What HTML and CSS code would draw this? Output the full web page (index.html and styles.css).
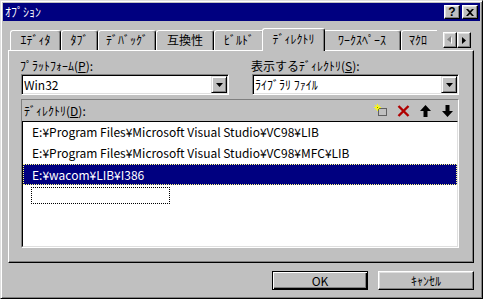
FILE: index.html
```html
<!DOCTYPE html>
<html lang="ja">
<head>
    <meta charset="UTF-8">
    <title>ｵﾌﾟｼｮﾝ</title>
    <link rel="stylesheet" href="styles.css">
</head>
<body>
    <div class="window">
        <div class="titlebar">
            <span class="title">ｵﾌﾟｼｮﾝ</span>
            <div class="cap-buttons">
                <div class="cap-btn cap-help">?</div>
                <div class="cap-btn">
                    <svg width="8" height="7" viewBox="0 0 8 7"><path d="M0 0h2l2 2 2-2h2L5 3.5 8 7H6L4 5 2 7H0l3-3.5z" fill="#000"/></svg>
                </div>
            </div>
        </div>
        <div class="dialog">
            <div class="tabstrip">
                <div class="tabs">
                    <div class="tab tab-editor">ｴﾃﾞｨﾀ</div>
                    <div class="tab tab-tab">ﾀﾌﾞ</div>
                    <div class="tab tab-debug">ﾃﾞﾊﾞｯｸﾞ</div>
                    <div class="tab tab-compat">互換性</div>
                    <div class="tab tab-build">ﾋﾞﾙﾄﾞ</div>
                    <div class="tab tab-dir active">ﾃﾞｨﾚｸﾄﾘ</div>
                    <div class="tab tab-workspace">ﾜｰｸｽﾍﾟｰｽ</div>
                    <div class="tab tab-macro">ﾏｸﾛ</div>
                </div>
                <div class="tab-scroll">
                    <div class="scroll-btn">
                        <svg width="6" height="8" viewBox="0 0 6 8"><path d="M5 1v7L1 4.5z" fill="#fff"/><path d="M4 0v7L0 3.5z" fill="#808080"/></svg>
                    </div>
                    <div class="scroll-btn">
                        <svg width="4" height="7" viewBox="0 0 4 7"><path d="M0 0v7l4-3.5z" fill="#000"/></svg>
                    </div>
                </div>
            </div>
            <div class="panel">
                <div class="field-row">
                    <div class="field field-platform">
                        <label>ﾌﾟﾗｯﾄﾌｫｰﾑ(<u>P</u>):</label>
                        <div class="combo">
                            <span class="combo-text">Win32</span>
                            <span class="drop"><svg width="7" height="4" viewBox="0 0 7 4"><path d="M0 0h7L3.5 4z" fill="#000"/></svg></span>
                        </div>
                    </div>
                    <div class="field field-kind">
                        <label>表示するﾃﾞｨﾚｸﾄﾘ(<u>S</u>):</label>
                        <div class="combo">
                            <span class="combo-text">ﾗｲﾌﾞﾗﾘ ﾌｧｲﾙ</span>
                            <span class="drop"><svg width="7" height="4" viewBox="0 0 7 4"><path d="M0 0h7L3.5 4z" fill="#000"/></svg></span>
                        </div>
                    </div>
                </div>
                <div class="dirbox">
                    <div class="dirhead">
                        <label>ﾃﾞｨﾚｸﾄﾘ(<u>D</u>):</label>
                        <div class="tools">
                            <span class="tool">
                                <svg width="14" height="13" viewBox="0 0 14 13">
                                    <rect x="4.5" y="4.5" width="8" height="7" fill="none" stroke="#000" stroke-dasharray="1 1"/>
                                    <path d="M3.5 0v7M0 3.5h7M1 1l5 5M6 1L1 6" stroke="#ffff00" stroke-width="1"/>
                                    <rect x="3" y="3" width="1" height="1" fill="#808000"/>
                                </svg>
                            </span>
                            <span class="tool">
                                <svg width="13" height="12" viewBox="0 0 13 12"><path d="M1.5 1l10 10M11.5 1l-10 10" stroke="#b00000" stroke-width="2.4"/></svg>
                            </span>
                            <span class="tool">
                                <svg width="11" height="12" viewBox="0 0 11 12"><path d="M5.5 0L11 6H7.5v6h-4V6H0z" fill="#000"/></svg>
                            </span>
                            <span class="tool">
                                <svg width="11" height="12" viewBox="0 0 11 12"><path d="M5.5 12L11 6H7.5V0h-4v6H0z" fill="#000"/></svg>
                            </span>
                        </div>
                    </div>
                    <ul class="dirlist">
                        <li class="item">E:¥Program Files¥Microsoft Visual Studio¥VC98¥LIB</li>
                        <li class="item">E:¥Program Files¥Microsoft Visual Studio¥VC98¥MFC¥LIB</li>
                        <li class="item selected">E:¥wacom¥LIB¥I386</li>
                        <li class="item item-new"><span class="editbox"></span></li>
                    </ul>
                </div>
            </div>
            <div class="buttons">
                <div class="btn btn-default">OK</div>
                <div class="btn">ｷｬﾝｾﾙ</div>
            </div>
        </div>
    </div>
</body>
</html>
```

FILE: styles.css
```css
* {
    box-sizing: border-box;
}
html, body {
    margin: 0;
    background: #c0c0c0;
    overflow: hidden;
}
body {
    font-family: "Noto Sans CJK JP", "Noto Sans", sans-serif;
    font-size: 12px;
    color: #000;
}
.window {
    width: 483px;
    height: 299px;
    display: flex;
    flex-direction: column;
    padding: 2px;
    background: #c0c0c0;
    border: 1px solid;
    border-color: #dfdfdf #000 #000 #dfdfdf;
    box-shadow: inset 1px 1px #fff, inset -1px -1px #808080;
}
.titlebar {
    display: flex;
    align-items: center;
    height: 18px;
    padding: 0 2px;
    background: #000080;
    color: #fff;
}
.title {
    flex: 1;
    line-height: 18px;
}
.cap-buttons {
    display: flex;
    gap: 2px;
}
.cap-btn {
    display: flex;
    justify-content: center;
    align-items: center;
    width: 16px;
    height: 14px;
    background: #c0c0c0;
    border: 1px solid;
    border-color: #fff #000 #000 #fff;
    box-shadow: inset -1px -1px #808080, inset 1px 1px #dfdfdf;
}
.cap-help {
    color: #000;
    font-family: "Liberation Sans", sans-serif;
    font-weight: bold;
    font-size: 12px;
    line-height: 12px;
}
.dialog {
    flex: 1;
    display: flex;
    flex-direction: column;
    padding: 7px 6px 0 5px;
}

/* tabs */
.tabstrip {
    display: flex;
    align-items: flex-end;
    height: 22px;
    position: relative;
    z-index: 1;
}
.tabs {
    display: flex;
    align-items: flex-end;
    width: 429px;
    height: 23px;
    margin-bottom: -1px;
    padding-left: 2px;
    overflow: hidden;
}
.tab {
    flex: none;
    height: 20px;
    margin-bottom: 1px;
    background: #c0c0c0;
    border: 1px solid;
    border-bottom: 0;
    border-color: #fff #000 #000 #fff;
    border-radius: 3px 3px 0 0;
    box-shadow: inset -1px 0 #808080;
    text-align: center;
    line-height: 18px;
    white-space: nowrap;
}
.tab-editor { width: 51px; }
.tab-tab { width: 37px; }
.tab-debug { width: 58px; }
.tab-compat { width: 58px; }
.tab-build { width: 50px; }
.tab-dir { width: 59px; }
.tab-workspace { width: 78px; }
.tab-macro { width: 60px; text-align: left; padding-left: 7px; }
.tab.active {
    position: relative;
    z-index: 1;
    width: 63px;
    height: 23px;
    margin: 0 -2px;
    line-height: 19px;
}
.tab-scroll {
    display: flex;
    margin: 0 3px 2px auto;
}
.scroll-btn {
    display: flex;
    justify-content: center;
    align-items: center;
    width: 14px;
    height: 16px;
    border: 1px solid;
    border-color: #fff #000 #000 #fff;
    box-shadow: inset -1px -1px #808080, inset 1px 1px #dfdfdf;
}

/* panel */
.panel {
    height: 213px;
    padding: 8px 14px 0 12px;
    border: 1px solid;
    border-color: #fff #000 #000 #fff;
    box-shadow: inset -1px -1px #808080;
}
.field-row {
    display: flex;
    justify-content: space-between;
}
.field-platform { width: 208px; }
.field-kind { width: 207px; }
.field label {
    display: block;
    line-height: 14px;
    margin: 0 0 1px -1px;
    white-space: nowrap;
}
.combo {
    display: flex;
    align-items: center;
    height: 21px;
    padding: 1px;
    background: #fff;
    border: 1px solid;
    border-color: #808080 #fff #fff #808080;
    box-shadow: inset 1px 1px #000, inset -1px -1px #dfdfdf;
}
.combo-text {
    flex: 1;
    padding-left: 1px;
    line-height: 17px;
    white-space: nowrap;
}
.drop {
    display: flex;
    justify-content: center;
    align-items: center;
    width: 16px;
    height: 17px;
    background: #c0c0c0;
    border: 1px solid;
    border-color: #dfdfdf #000 #000 #dfdfdf;
    box-shadow: inset 1px 1px #fff, inset -1px -1px #808080;
}
.dirbox {
    height: 149px;
    margin-top: 4px;
    border: 1px solid;
    border-color: #808080 #fff #fff #808080;
}
.dirhead {
    display: flex;
    align-items: center;
    height: 21px;
    padding-left: 2px;
}
.tools {
    display: flex;
    margin-left: auto;
}
.tool {
    display: flex;
    justify-content: center;
    align-items: center;
    width: 22px;
    height: 16px;
}
.dirlist {
    height: 126px;
    margin: 0;
    padding: 0;
    list-style: none;
    background: #fff;
    border: 1px solid;
    border-color: #000 #dfdfdf #dfdfdf #000;
}
.item {
    height: 21px;
    padding-left: 9px;
    line-height: 19px;
    white-space: nowrap;
}
.item.selected {
    padding-left: 8px;
    background: #000080;
    color: #fff;
    border: 1px dotted #ffff80;
}
.item-new {
    padding: 2px 0 0 8px;
}
.editbox {
    display: block;
    width: 139px;
    height: 17px;
    border: 1px dotted #000;
}

/* buttons */
.buttons {
    display: flex;
    justify-content: flex-end;
    gap: 10px;
    margin-top: 8px;
}
.btn {
    width: 96px;
    height: 19px;
    text-align: center;
    line-height: 17px;
    border: 1px solid;
    border-color: #fff #000 #000 #fff;
    box-shadow: inset -1px -1px #808080, inset 1px 1px #dfdfdf;
}
.btn-default {
    border-color: #000;
    box-shadow: inset 1px 1px #fff, inset -1px -1px #000, inset -2px -2px #808080;
}
```
